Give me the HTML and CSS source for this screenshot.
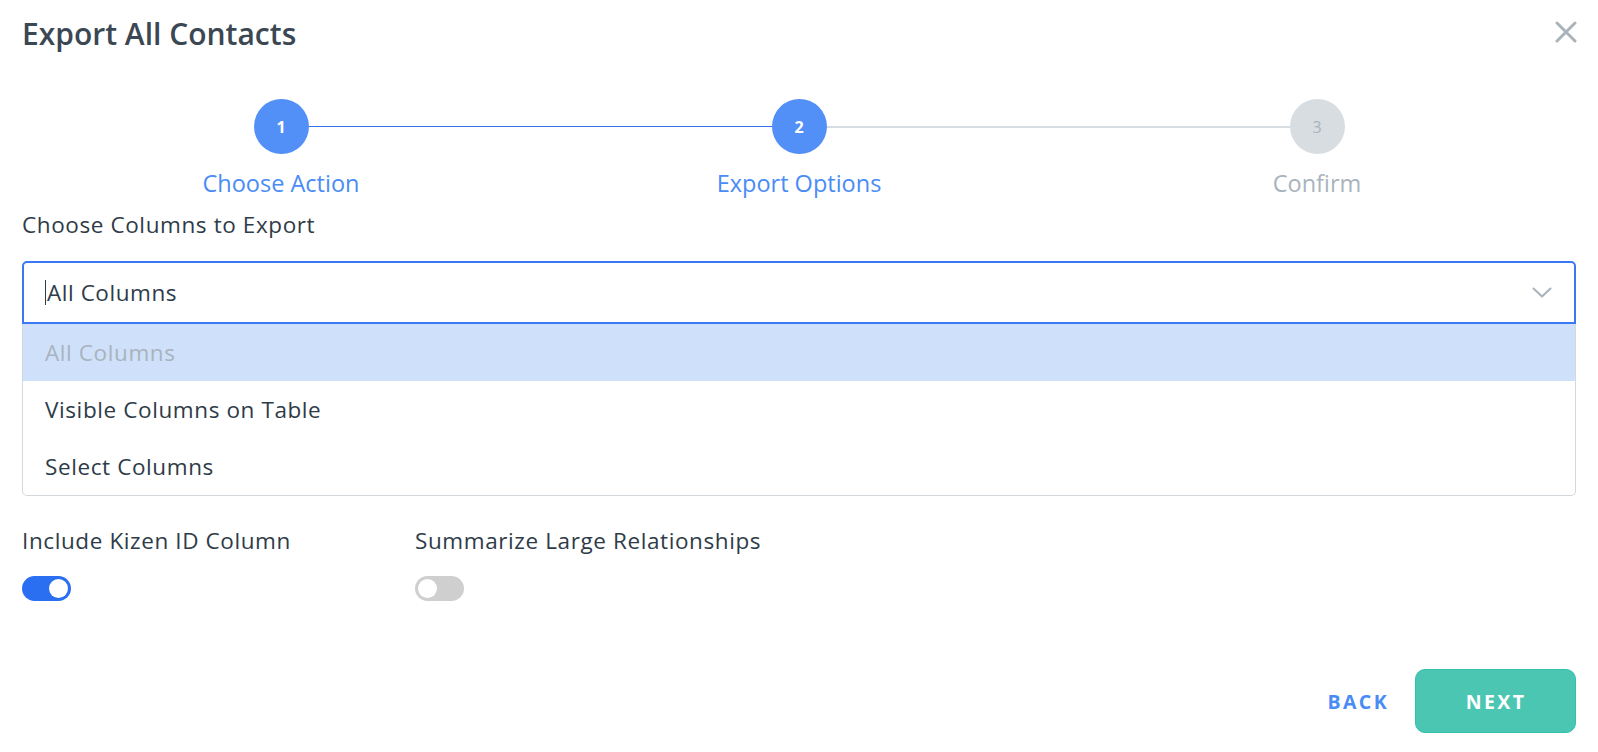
FILE: index.html
```html
<!DOCTYPE html>
<html lang="en">
<head>
<meta charset="utf-8">
<title>Export All Contacts</title>
<link rel="stylesheet" href="styles.css">
</head>
<body>
<div class="modal">
  <header class="header">
    <h1 class="title">Export All Contacts</h1>
    <button class="close" aria-label="Close">
      <svg width="22" height="22" viewBox="0 0 22 22"><path d="M2 2 L20 20 M20 2 L2 20" stroke="#a9b3bc" stroke-width="3" stroke-linecap="round" fill="none"/></svg>
    </button>
  </header>

  <div class="stepper">
    <div class="step">
      <div class="track"><span class="line none"></span><span class="dot active">1</span><span class="line done"></span></div>
      <div class="step-label active">Choose Action</div>
    </div>
    <div class="step">
      <div class="track"><span class="line done"></span><span class="dot active">2</span><span class="line todo"></span></div>
      <div class="step-label active">Export Options</div>
    </div>
    <div class="step">
      <div class="track"><span class="line todo"></span><span class="dot">3</span><span class="line none"></span></div>
      <div class="step-label">Confirm</div>
    </div>
  </div>

  <div class="field-label">Choose Columns to Export</div>
  <div class="select">
    <div class="select-control">
      <span class="caret"></span><span class="value">All Columns</span>
      <svg class="chevron" width="20" height="11" viewBox="0 0 20 11"><path d="M1.5 1.5 L10 9.5 L18.5 1.5" stroke="#a9b3bc" stroke-width="2" fill="none" stroke-linecap="round" stroke-linejoin="round"/></svg>
    </div>
    <ul class="menu">
      <li class="option selected">All Columns</li>
      <li class="option">Visible Columns on Table</li>
      <li class="option">Select Columns</li>
    </ul>
  </div>

  <div class="toggles">
    <div class="toggle-item">
      <div class="toggle-label">Include Kizen ID Column</div>
      <span class="switch on"><span class="knob"></span></span>
    </div>
    <div class="toggle-item">
      <div class="toggle-label">Summarize Large Relationships</div>
      <span class="switch"><span class="knob"></span></span>
    </div>
  </div>

  <footer class="footer">
    <button class="btn-back">BACK</button>
    <button class="btn-next">NEXT</button>
  </footer>
</div>
</body>
</html>
```
FILE: styles.css
```css
* { box-sizing: border-box; }
html, body { margin: 0; padding: 0; background: #fff; }
body { font-family: "Open Sans", "Lato", sans-serif; color: #2e3b48; }

.modal { width: 1598px; padding: 0 22px; }

.header { height: 66px; display: flex; align-items: center; justify-content: space-between; }
.title { margin: 0; font-size: 30px; font-weight: 600; color: #3b4753; line-height: 1; letter-spacing: 0; padding-top: 1px; }
.close { border: 0; background: none; padding: 0; width: 22px; height: 22px; display: flex; margin-right: -1px; margin-top: -2px; }

.stepper { display: grid; grid-template-columns: 1fr 1fr 1fr; margin-top: 33px; }
.step { display: flex; flex-direction: column; align-items: center; }
.track { display: flex; align-items: center; width: 100%; }
.line { flex: 1; height: 2px; }
.line.done { background: #2f72f0; height: 1.5px; }
.line.todo { background: #d6dce1; }
.line.none { background: transparent; }
.dot { width: 55px; height: 55px; border-radius: 50%; background: #d8dde2; color: #a9b3bd; display: flex; align-items: center; justify-content: center; font-size: 16px; font-weight: 400; flex: none; }
.dot.active { background: #5290f8; color: #fff; font-weight: 700; }
.step-label { margin-top: 14px; font-size: 23.5px; line-height: 30px; color: #a9b3bd; }
.step-label.active { color: #4a8cf6; }

.field-label { margin-top: 14px; font-size: 22.5px; line-height: 26px; color: #2e3b48; letter-spacing: 0.6px; }

.select { margin-top: 23px; }
.select-control { height: 63px; border: 2px solid #3b78f3; border-radius: 5px 5px 0 0; display: flex; align-items: center; padding: 0 22px 0 21px; }
.caret { width: 1px; height: 25px; background: #2e3b48; margin-right: 1px; }
.value { font-size: 22.5px; flex: 1; letter-spacing: 0.55px; }
.chevron { flex: none; }
.menu { list-style: none; margin: 0; padding: 0; border: 1px solid #d3d8dd; border-top: 0; border-radius: 0 0 5px 5px; overflow: hidden; }
.option { height: 57px; display: flex; align-items: center; padding-left: 22px; font-size: 22.5px; color: #2e3b48; letter-spacing: 0.6px; }
.option.selected { background: #cfe0fa; color: #a9b3bd; }

.toggles { display: flex; gap: 0; margin-top: 32px; }
.toggle-item { width: 393px; }
.toggle-label { font-size: 22.5px; line-height: 26px; color: #2e3b48; letter-spacing: 0.6px; }
.switch { display: block; margin-top: 22px; width: 49px; height: 25px; border-radius: 13px; background: #cfcfcf; position: relative; }
.switch .knob { position: absolute; top: 3px; left: 3px; width: 19px; height: 19px; border-radius: 50%; background: #fff; }
.switch.on { background: #2a6ff2; }
.switch.on .knob { left: 27px; }

.footer { display: flex; justify-content: flex-end; align-items: center; margin-top: 68px; gap: 26px; }
.btn-back { border: 0; background: none; padding: 0; font-family: inherit; font-size: 19.5px; font-weight: 700; letter-spacing: 2.4px; color: #4a8cf6; }
.btn-next { width: 161px; height: 64px; border: 1px solid #30c2ab; border-radius: 10px; background: #4ac6b3; color: #fff; font-family: inherit; font-size: 19.5px; font-weight: 700; letter-spacing: 2.4px; padding-left: 7px; }
```
